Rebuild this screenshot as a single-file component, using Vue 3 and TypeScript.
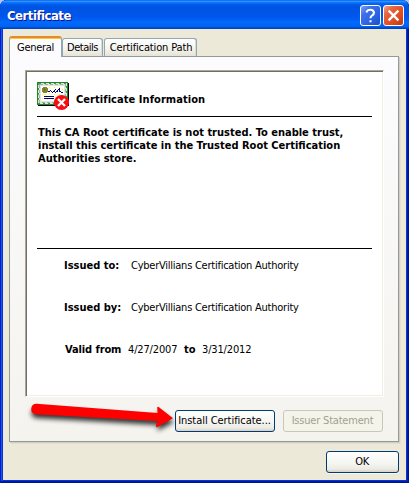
<script setup lang="ts">
import { ref } from 'vue'

interface TabItem {
  id: string
  label: string
}

const tabs: TabItem[] = [
  { id: 'general', label: 'General' },
  { id: 'details', label: 'Details' },
  { id: 'path', label: 'Certification Path' },
]
const active = ref('general')

const authority = 'CyberVillians Certification Authority'
</script>

<template>
  <div class="desktop">
    <div class="window">
      <header class="titlebar">
        <span class="title">Certificate</span>
        <button class="cap help" aria-label="Help">
          <svg width="21" height="21" viewBox="0 0 21 21">
            <path d="M6.8 7.6V6.4Q7.6 4.7 10.4 4.7T14 7.4Q14 9.2 12.2 10.3T10.5 13.2M10.5 15.2V17.2" fill="none" stroke="#fff" stroke-width="2.1" />
          </svg>
        </button>
        <button class="cap close" aria-label="Close">
          <svg width="21" height="21" viewBox="0 0 21 21">
            <path d="M5.6 5.6L15.4 15.4M15.4 5.6L5.6 15.4" fill="none" stroke="#fff" stroke-width="2.3" />
          </svg>
        </button>
      </header>
      <main class="body">
        <nav class="tabs">
          <button
            v-for="tab in tabs"
            :key="tab.id"
            class="tab"
            :class="[tab.id, { active: tab.id === active }]"
            @click="active = tab.id"
          >{{ tab.label }}</button>
        </nav>
        <section class="panel">
          <div class="sheet">
            <div class="heading">
              <svg class="cert" width="33" height="29" viewBox="0 0 33 29" shape-rendering="crispEdges">
                <path d="M1 1H32V24H1z" fill="#000" />
                <path d="M0 0H31V23H0z" fill="#178a2a" />
                <path d="M1 1H30V22H1z" fill="#dfe4df" />
                <path d="M1.5 1.5H29.5V21.5H1.5z" fill="none" stroke="#3d9a4b" stroke-dasharray="2 3" />
                <path d="M2.5 2.5H28.5V20.5H2.5z" fill="none" stroke="#a3ada3" stroke-dasharray="3 2" />
                <path d="M4 4H27V19H4z" fill="#fffff4" />
                <path d="M4.5 4.5H26.5V18.5H4.5z" fill="none" stroke="#fff" />
                <path d="M12 5h1v1h-1zM17 5h1v1h-1zM22 5h1v1h-1zM25 7h1v1h-1zM5 12h1v1h-1zM8 12h1v1h-1zM12 11h1v1h-1zM17 12h1v1h-1zM22 12h1v1h-1zM5 16h1v1h-1zM10 17h1v1h-1zM15 17h1v1h-1z" fill="#ff0" />
                <path d="M6 5h4v1h1v4h-1v1H6v-1H5V6h1z" fill="#87852f" />
                <path d="M7 6h1v1h1v1H8v1H7V8H6V7h1z" fill="#6b6a55" />
                <path d="M11 9h2v1h-2zM13 8h1v1h-1zM14 9h1v1h-1zM15 10h1v1h-1zM16 9h1v1h-1zM17 8h1v2h-1zM18 7h1v1h-1zM18 10h1v1h-1zM19 9h1v1h-1zM20 8h1v2h-1zM21 7h1v1h-1zM22 6h1v4h-1zM23 9h1v1h-1zM24 10h2v1h-2zM7 14h10v1H7zM7 16h10v1H7z" fill="#00008c" />
                <circle cx="24.5" cy="20.5" r="7.6" fill="#f90d12" shape-rendering="auto" />
                <path d="M21 17L28 24M28 17L21 24" stroke="#fff" stroke-width="2.3" shape-rendering="auto" />
              </svg>
              <h1 class="t-info">Certificate Information</h1>
            </div>
            <div class="message">
              <p>This CA Root certificate is not trusted. To enable trust,</p>
              <p>install this certificate in the Trusted Root Certification</p>
              <p>Authorities store.</p>
            </div>
            <dl class="fields">
              <div class="row"><dt>Issued to:</dt><dd class="who">{{ authority }}</dd></div>
              <div class="row"><dt>Issued by:</dt><dd class="who">{{ authority }}</dd></div>
              <div class="row valid">
                <dt class="from">Valid from</dt><dd class="start">4/27/2007</dd>
                <dt class="to">to</dt><dd class="end">3/31/2012</dd>
              </div>
            </dl>
          </div>
          <div class="actions">
            <button class="btn install"><span>Install Certificate...</span></button>
            <button class="btn issuer" disabled><span>Issuer Statement</span></button>
          </div>
        </section>
        <footer class="footer">
          <button class="btn ok"><span>OK</span></button>
        </footer>
      </main>
    </div>
    <svg class="arrow" width="170" height="60" viewBox="20 390 170 60">
      <defs>
        <filter id="soft" x="-20%" y="-50%" width="140%" height="220%">
          <feGaussianBlur stdDeviation="2.6" />
        </filter>
      </defs>
      <path d="M36 404L158 413.5L156 407L173 418L156 427L158 421L35 414A5 5 0 0 1 36 404z" transform="translate(1 4)" fill="#000" opacity=".8" filter="url(#soft)" />
      <path d="M36.500 403.700L157.500 412.900L157.200 407.200Q158 406.500 159 407.200L173 418.200L157 427.200Q155.500 427 156 425.500L157.500 421L35.500 414.200A5.300 5.300 0 0 1 36.500 403.700z" fill="#f00" />
    </svg>
  </div>
</template>

<style>
html, body { margin: 0; overflow: hidden; }
</style>

<style scoped>
* { box-sizing: border-box; }
.desktop {
  position: relative; width: 409px; height: 483px; background: #b4c4f4;
  font: 11px/13px "DejaVu Sans Condensed", "DejaVu Sans", sans-serif; color: #000;
}
button { font: inherit; color: inherit; margin: 0; padding: 0; white-space: nowrap; }
h1, p, dl, dt, dd { margin: 0; white-space: nowrap; font-size: 11px; line-height: 13px; }
.window {
  width: 409px; height: 483px; padding: 0 3px 3px; overflow: hidden;
  border-radius: 7px 7px 0 0; background: #0831d9;
  box-shadow: inset 1px 0 #0019cf, inset -1px -1px #00138c, inset -2px -2px #001ea0, inset 2px 0 #0a5be8;
}
.titlebar {
  height: 29px; margin: 0 -3px; padding: 5px 5px 0 7px; display: flex; gap: 2px;
  background: linear-gradient(#0058ee 0, #3593ff 4%, #288eff 6%, #127dff 8%, #036ffc 10%, #0262ee 14%, #0057e5 20%, #0054e3 24%, #0055eb 56%, #005bf5 66%, #026afe 76%, #0062ef 92%, #0052d6 94%, #003dc4 100%);
}
.title {
  flex: 1; color: #fff; font: bold 13px/22px "DejaVu Sans Condensed", sans-serif;
  letter-spacing: -0.5px; text-shadow: 1px 1px #0f1089;
}
.cap { width: 21px; height: 21px; border: 1px solid #fff; border-radius: 3px; overflow: hidden; }
.cap svg { display: block; margin: -1px; }
.help { background: linear-gradient(135deg, #7ea4f4 0, #3f70e8 28%, #2a62e4 65%, #1b4fc4 100%); }
.close { background: linear-gradient(135deg, #f0a48c 0, #e5633f 28%, #e04c20 65%, #b93a14 100%); }
.body { height: 451px; padding: 7px 7px 0 6px; background: #ece9d8; }
.tabs { height: 21px; display: flex; align-items: flex-end; }
.tab {
  height: 18px; margin: 0 1px 1px 0; border: 1px solid #91a7b4; border-bottom: 0;
  border-radius: 3px 3px 0 0; background: linear-gradient(#fff, #f4f3ee 60%, #e6e3d6); line-height: 18px;
  box-shadow: inset -1px 0 #dddccf;
}
.tab.active {
  height: 21px; margin: 0; border-top: 2px solid #e68b2c; background: #fcfcfe; line-height: 17px;
  box-shadow: inset 0 1px #ffc73c;
}
.general { width: 53px; letter-spacing: -0.3px; }
.details { width: 41px; letter-spacing: -0.5px; }
.path { width: 93px; letter-spacing: -0.15px; padding-left: 1px; }
.panel {
  width: 390px; height: 386px; margin-top: -1px; padding: 13px 15px 0;
  border: 1px solid #919b9c; background: linear-gradient(#fcfcfe, #f4f3ee);
  box-shadow: 1px 1px #d0cec0, 2px 2px #e3e0d0;
}
.sheet {
  width: 359px; height: 327px; padding: 10px; background: #fff;
  border: 1px solid; border-color: #aca899 #fff #fff #aca899;
  box-shadow: inset 1px 1px #716f64, inset -1px -1px #f1efe2;
}
.heading { height: 36px; width: 335px; margin-left: 1px; display: flex; border-bottom: 1px solid #000; }
.cert { flex: none; margin-top: 1px; }
.t-info { margin: 12px 0 0 6px; letter-spacing: 0.06px; }
.message { height: 132px; width: 335px; margin-left: 1px; padding: 9px 0 0 1px; border-bottom: 1px solid #000; font-weight: bold; }
.row { display: flex; height: 42px; padding-left: 28px; }
.fields { padding-top: 10px; }
.fields dt { font-weight: bold; width: 67px; flex: none; }
.who { letter-spacing: -0.245px; }
.valid { padding-left: 29px; }
.valid .from { width: 63px; letter-spacing: -0.1px; }
.valid .to { width: 18px; }
.start { width: 56px; letter-spacing: -0.15px; }
.end { letter-spacing: -0.15px; }
.actions { display: flex; gap: 8px; justify-content: flex-end; padding: 13px 0 0; }
.btn {
  height: 22px; border: 1px solid #003c74; border-radius: 3px; line-height: 20px;
  background: linear-gradient(#fff, #f4f4f0 60%, #ecebe5 85%, #d8d0c4); box-shadow: 0 1px #f8f7f1;
}
.install, .issuer { width: 100px; padding-right: 1px; }
.install { letter-spacing: -0.05px; }
.issuer { letter-spacing: -0.2px; }
.btn:disabled { color: #a1a192; border-color: #c9c7ba; background: #f5f4ea; box-shadow: none; }
.footer { display: flex; justify-content: flex-end; padding: 9px 0 0; }
.ok { width: 73px; letter-spacing: -0.4px; padding-right: 1px; }
.arrow { position: absolute; left: 20px; top: 390px; pointer-events: none; }
</style>
